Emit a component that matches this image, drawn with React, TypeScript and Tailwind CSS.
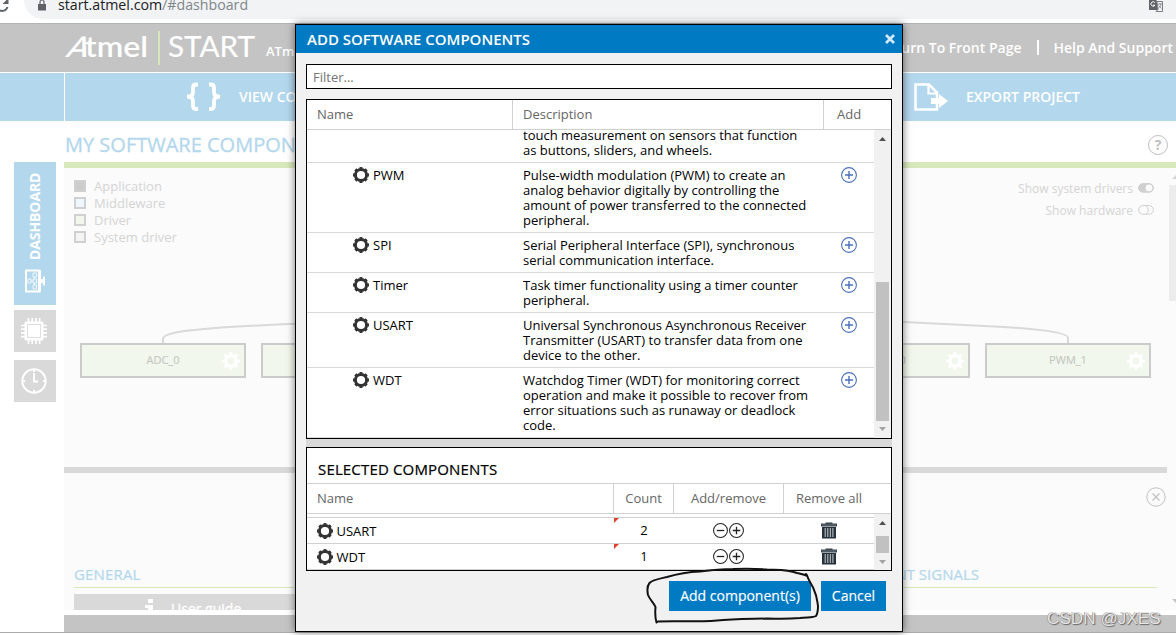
import React from "react";

const components = [
  { name: "PWM", text: ["Pulse-width modulation (PWM) to create an", "analog behavior digitally by controlling the", "amount of power transferred to the connected", "peripheral."] },
  { name: "SPI", text: ["Serial Peripheral Interface (SPI), synchronous", "serial communication interface."] },
  { name: "Timer", text: ["Task timer functionality using a timer counter", "peripheral."] },
  { name: "USART", text: ["Universal Synchronous Asynchronous Receiver", "Transmitter (USART) to transfer data from one", "device to the other."] },
  { name: "WDT", text: ["Watchdog Timer (WDT) for monitoring correct", "operation and make it possible to recover from", "error situations such as runaway or deadlock", "code."] },
];

const selected = [
  { name: "USART", count: 2 },
  { name: "WDT", count: 1 },
];

function DarkGear() {
  return (
    <svg width="16" height="16" viewBox="0 0 16 16" fill="none" stroke="#333" className="shrink-0">
      <circle cx="8" cy="8" r="5.6" strokeWidth="3" />
      <circle cx="8" cy="8" r="7" strokeWidth="2" pathLength="80" strokeDasharray="5.4 4.6" strokeDashoffset="2.7" />
    </svg>
  );
}

function WhiteGear() {
  return (
    <svg width="18" height="18" viewBox="0 0 18 18" fill="none" stroke="#fff" className="shrink-0">
      <circle cx="9" cy="9" r="5.2" strokeWidth="3.6" />
      <circle cx="9" cy="9" r="7.5" strokeWidth="3" pathLength="80" strokeDasharray="4.6 5.4" strokeDashoffset="2.3" />
    </svg>
  );
}

function RoundSign({ plus, size, color }: { plus: boolean; size: number; color: string }) {
  return (
    <svg width={size} height={size} viewBox="0 0 16 16" fill="none" stroke={color} className="shrink-0">
      <circle cx="8" cy="8" r="7.4" strokeWidth="1.1" />
      <path d={plus ? "M8 4v8M4 8h8" : "M4 8h8"} strokeWidth="1.4" />
    </svg>
  );
}

function Trash() {
  return (
    <svg width="16" height="17" viewBox="0 0 16 17" className="shrink-0">
      <path d="M4.500 1.500V.5h7v1H16v3H0v-3z" fill="#3a454e" />
      <path d="M1 5h14v11.500H1z" fill="#26323c" />
      <path d="M4.200 6v9M6.800 6v9M9.300 6v9M11.900 6v9" stroke="#c9cdd0" strokeWidth="1" />
      <path d="M1 3h14" stroke="#77808a" strokeWidth=".7" />
    </svg>
  );
}

function Arrow({ down, color }: { down?: boolean; color: string }) {
  return (
    <svg width="7" height="4" viewBox="0 0 7 4">
      <path d={down ? "M0 0h7L3.5 4z" : "M0 4h7L3.5 0z"} fill={color} />
    </svg>
  );
}

function Node({ label, place }: { label: string; place: string }) {
  return (
    <div className={"absolute top-[175px] flex h-[35px] w-[166px] items-center justify-end border-2 border-[#cbcbcb] bg-[#f1f7ec] pr-[4px] " + place}>
      <span className="flex-1 pl-[22px] text-center text-[11px] text-[#c4c6c2] [-webkit-text-stroke:0.1px_#c4c6c2]">{label}</span>
      <WhiteGear />
    </div>
  );
}

function BrowserBar() {
  return (
    <div className="flex h-[24px] shrink-0 items-start border-b border-[#b3b3b3] bg-white">
      <svg width="24" height="19" viewBox="0 0 24 19" className="shrink-0">
        <path d="M-4 6A6 6 0 0 0 7.500 7" fill="none" stroke="#5f6368" strokeWidth="2" />
        <path d="M8.500-2V4H2.500z" fill="#5f6368" />
      </svg>
      <div className="flex h-[19px] flex-1 items-start rounded-bl-[19px] bg-[#f1f3f4] pr-[13px] pl-[14px]">
        <svg width="8" height="11" viewBox="0 0 8 11" className="shrink-0">
          <path d="M0 4h8v6.500H0z" fill="#5f6368" />
          <path d="M2 4V2a2 2 0 0 1 4 0v2" stroke="#5f6368" strokeWidth="1.200" fill="none" />
        </svg>
        <span className="mt-[-6px] ml-[12px] flex-1 text-[14.200px] leading-[22px] text-[#202124]">
          start.atmel.com<span className="text-[#80868b]">/#dashboard</span>
        </span>
        <svg width="14" height="12" viewBox="0 0 14 12">
          <path d="M0 0h7.500l2 10H0z" fill="#5f6368" />
          <path d="M8 1.500h5.500v10H7l2-2z" fill="#f1f3f4" stroke="#7b7f84" />
          <path d="M5.800 2.500A2.200 2.200 0 1 0 6 5.200H4" fill="none" stroke="#fff" />
          <path d="M9 4h4M11 3v1M12 4c0 2-1 3-2.500 4M9.800 5.500l2.500 3" fill="none" stroke="#7b7f84" strokeWidth=".8" />
        </svg>
      </div>
    </div>
  );
}

function Header() {
  return (
    <div className="flex h-[49px] shrink-0 items-center border-b border-white bg-[#c4c4c4] pr-[3px] pl-[65px] text-white">
      <div className="flex h-[34px] w-[93px] items-center">
        <svg width="86" height="28" viewBox="0 0 86 28" fill="#fff">
          <text transform="translate(0 22.5) skewX(-22)" fontFamily="Lato" fontWeight="600" fontSize="28.500" textLength="21" lengthAdjust="spacingAndGlyphs">A</text>
          <text x="20" y="22.5" fontFamily="Lato" fontWeight="600" fontSize="28" textLength="63" lengthAdjust="spacingAndGlyphs">tmel</text>
          <circle cx="80.500" cy="3.500" r="1" fillOpacity=".5" />
        </svg>
      </div>
      <div className="h-[34px] w-[2px] bg-[#d5e8b9]" />
      <svg width="92" height="30" viewBox="0 0 92 30" fill="#fff" stroke="#fff" strokeWidth=".2" className="ml-[7px]">
        <text x="1" y="24" fontFamily="Lato" fontSize="28" textLength="87" lengthAdjust="spacingAndGlyphs">START</text>
      </svg>
      <span className="mt-[7px] ml-[7px] flex-1 text-[13px] font-semibold">ATmega4809</span>
      <span className="mt-[-2px] text-[14px] font-semibold">Return To Front Page</span>
      <div className="mx-[15px] mt-[-2px] h-[15px] w-[2px] bg-white" />
      <span className="mt-[-2px] text-[14px] font-semibold">Help And Support</span>
    </div>
  );
}

function Menu() {
  return (
    <div className="flex h-[48px] shrink-0 items-center bg-[#b3d7ed] text-[14px] font-semibold text-white">
      <div className="h-full w-[65px] border-r border-white" />
      <svg width="36" height="30" viewBox="0 0 36 30" fill="none" stroke="#fff" strokeWidth="3.800" className="ml-[121px]">
        <path d="M12 2.500H10Q7 2.500 7 6v4.500Q7 14.500 1 14.500 7 14.500 7 19v4.500Q7 27 10 27h2" />
        <path d="M23 2.500h2q3 0 3 3.500v4.500q0 4 6 4-6 0-6 4.500v4.500q0 3.500-3 3.500h-2" />
      </svg>
      <span className="mt-[-2px] ml-[17px] flex-1">VIEW CODE</span>
      <svg width="34" height="29" viewBox="0 0 34 29" className="mr-[18px]">
        <path d="M1.500 1.500H15l8 8v17H1.500z" fill="none" stroke="#fff" strokeWidth="2.600" />
        <path d="M14.500 2v8.500H23" fill="none" stroke="#fff" strokeWidth="2.200" />
        <path d="M17 15h8v-4l9 7-9 7v-4h-8z" fill="#fff" />
      </svg>
      <span className="mt-[-2px] mr-[96px]">EXPORT PROJECT</span>
    </div>
  );
}

function Sidebar() {
  return (
    <div className="flex w-[64px] shrink-0 flex-col pt-[41px] pl-[14px]">
      <div className="flex h-[143px] w-[42px] flex-col items-center bg-[#b3d7ed]">
        <span className="mt-[10px] h-[88px] rotate-180 text-[14px] leading-[22px] font-bold tracking-[-0.1px] text-white [writing-mode:vertical-rl]">DASHBOARD</span>
        <svg width="20" height="24" viewBox="0 0 20 24" className="mt-[9px]" fill="none" stroke="#fff">
          <path d="M1 1.500h13.500v21H1z" strokeWidth="2" />
          <path d="M14.500 1.500v21" strokeWidth="3" />
          <path d="M15 12h4" strokeWidth="4" />
          <path d="M19 7.500v9" strokeWidth="2" />
          <path d="M8 4h3.500v4H8zM8 10h3.500v4H8zM8 16h3.500v4H8zM3 10h3v4H3zM6 12h2M9.500 8v2M9.500 14v2" strokeWidth=".8" />
        </svg>
      </div>
      <div className="mt-[5px] flex h-[42px] w-[42px] items-center justify-center bg-[#d9d9d9]">
        <svg width="26" height="26" viewBox="0 0 26 26" className="mr-[3px] mb-[1px]" fill="none" stroke="#fff">
          <path d="M7.500 0v26M11.200 0v26M14.900 0v26M18.600 0v26M0 7.500h26M0 11.200h26M0 14.900h26M0 18.600h26" strokeWidth="1.700" />
          <rect x="3.500" y="3.500" width="19" height="19" rx="1.500" fill="#fff" stroke="none" />
          <rect x="6.500" y="6.500" width="13" height="13" stroke="#d9d9d9" strokeWidth=".8" />
        </svg>
      </div>
      <div className="mt-[8px] flex h-[42px] w-[42px] items-center justify-center bg-[#d9d9d9]">
        <svg width="26" height="26" viewBox="0 0 26 26" className="mr-[3px] mb-[1px]" fill="none" stroke="#fff" strokeWidth="2">
          <circle cx="13" cy="13" r="11.700" />
          <path d="M13 5v8.500h4M13 1v3M13 22v3M1 13h3M22 13h3" />
        </svg>
      </div>
    </div>
  );
}

function Legend() {
  const items = [
    ["Application", "bg-[#cbcbcb]"],
    ["Middleware", "bg-[#eef7fd]"],
    ["Driver", "bg-[#f1f7ea]"],
    ["System driver", "bg-[#f4f4f4]"],
  ];
  return (
    <div className="flex flex-col pt-[10px] pl-[10px]">
      {items.map(([label, color]) => (
        <div key={label} className="flex h-[17px] items-start gap-[8px] text-[13px] leading-[17px] text-[#d4d4d4]">
          <div className={"mt-[2px] h-[12px] w-[12px] border-2 border-[#d0d0d0] " + color} />
          <span>{label}</span>
        </div>
      ))}
    </div>
  );
}

function Toggle({ on }: { on?: boolean }) {
  return (
    <svg width="16" height="10" viewBox="0 0 16 10" fill="none" stroke="#d0d0d0" className="mt-[-2px]">
      <rect x=".6" y=".6" width="14.800" height="8.600" rx="4.300" fill={on ? "#d0d0d0" : "none"} />
      {on ? <circle cx="11" cy="4.900" r="4" fill="#fbfbfb" /> : <path d="M8 1a4.500 4.500 0 0 1 0 8" />}
    </svg>
  );
}

function Dashboard() {
  return (
    <div className="flex min-w-0 flex-1 flex-col">
      <div className="flex h-[41px] shrink-0 items-center justify-between pt-[6px] pr-[8px]">
        <h1 className="pl-[1px] text-[20px] whitespace-nowrap text-[#b3d7ed] [-webkit-text-stroke:0.3px_#b3d7ed]">MY SOFTWARE COMPONENTS</h1>
        <div className="flex h-[20px] w-[20px] items-center justify-center rounded-full border border-[#bfbfbf] text-[14px] font-bold text-[#bfbfbf]">?</div>
      </div>
      <div className="h-[6px] shrink-0 bg-[#d7e8ba]" />
      <div className="relative flex h-[299px] shrink-0 justify-between bg-[#fbfbfb]">
        <Legend />
        <div className="flex flex-col items-end gap-[4px] pt-[12px] pr-[22px] text-[12px] leading-[18px] text-[#d4d4d4]">
          <div className="flex items-center gap-[5px]"><span>Show system drivers</span><Toggle on /></div>
          <div className="flex items-center gap-[5px]"><span>Show hardware</span><Toggle /></div>
        </div>
        <svg className="absolute top-0 left-0" width="1112" height="299" viewBox="0 0 1112 299" fill="none" stroke="#d9d9d9" strokeWidth="2">
          <path d="M99 176v-5Q99 165 130 162 170 158 250 155" />
          <path d="M820 153L940 159Q1004 163 1004 170v6" />
        </svg>
        <Node label="ADC_0" place="left-[16px]" />
        <Node label="ADC_1" place="left-[197px]" />
        <Node label="PWM_0" place="left-[740px]" />
        <Node label="PWM_1" place="left-[921px]" />
        <div className="absolute top-[17px] right-0 h-[116px] w-[7px] bg-[#ececec]" />
        <svg className="absolute top-[7px] right-0" width="4" height="4" viewBox="0 0 4 4"><path d="M0 4 4 0v4z" fill="#d4d4d4" /></svg>
      </div>
      <div className="flex h-[143px] shrink-0 flex-col overflow-hidden bg-[#fbfbfb]">
        <div className="mr-[9px] h-[6px] shrink-0 bg-[#d9d9d9]" />
        <div className="flex h-[92px] shrink-0 justify-end pt-[14px] pr-[10px]">
          <svg width="20" height="20" viewBox="0 0 20 20" fill="none" stroke="#c0c0c0">
            <circle cx="10" cy="10" r="9.200" />
            <path d="M6.500 6.500l7 7M13.500 6.500l-7 7" strokeWidth="1.200" />
          </svg>
        </div>
        <div className="flex flex-1 gap-[20px] pl-[10px]">
          <div className="flex w-[330px] flex-col">
            <h2 className="h-[23px] border-b border-[#d7e8ba] pt-[2px] text-[15px] leading-[14px] tracking-[0.15px] text-[#b3d7ed] [-webkit-text-stroke:0.2px_#b3d7ed]">GENERAL</h2>
            <div className="mt-[6px] flex h-[28px] gap-[16px] bg-[#d9d9d9] pl-[71px] text-white">
              <svg width="10" height="18" viewBox="0 0 10 18" fill="#fff" className="mt-[4px]"><path d="M3 1h5v4H3zM0 7h8v11H3V10H0z" /></svg>
              <span className="pt-[5px] text-[14px] leading-[20px] [-webkit-text-stroke:0.3px_#fff]">User guide</span>
            </div>
          </div>
          <div className="mr-[19px] flex flex-1 flex-col">
            <h2 className="h-[23px] border-b border-[#d7e8ba] pt-[2px] pr-[178px] text-right text-[15px] leading-[14px] whitespace-nowrap text-[#b3d7ed] [-webkit-text-stroke:0.2px_#b3d7ed]">EVENT SIGNALS</h2>
            <div className="flex justify-end"><svg className="mt-[11px] mr-[-19px]" width="4" height="4" viewBox="0 0 4 4"><path d="M0 0h4v4z" fill="#c4c4c4" /></svg></div>
          </div>
        </div>
      </div>
      <div className="h-[5px] shrink-0 bg-white" />
      <div className="h-[17px] shrink-0 bg-[#c4c4c4]" />
    </div>
  );
}

function Dialog() {
  return (
    <div className="absolute top-[24px] left-[295px] flex h-[608px] w-[608px] flex-col border border-black bg-[#f1f1f1] shadow-[0_0_8px_rgba(0,0,0,0.55)]">
      <div className="flex h-[28px] shrink-0 items-center justify-between bg-[#007ac2] pr-[7px] pl-[11px] text-white">
        <span className="text-[15px] font-semibold">ADD SOFTWARE COMPONENTS</span>
        <svg width="10" height="10" viewBox="0 0 10 10" stroke="#d5eaf7" strokeWidth="2.600"><path d="M1 1l8 8M9 1L1 9" /></svg>
      </div>
      <div className="flex flex-1 flex-col px-[10px] pt-[11px]">
        <div className="flex h-[25px] shrink-0 items-center border border-black bg-white pt-[2px] pl-[6px] text-[13px] text-[#757575]">Filter...</div>
        <div className="mt-[10px] flex h-[340px] shrink-0 flex-col border border-black bg-white">
          <div className="flex h-[30px] shrink-0 border-b border-[#d0d0d0] text-[13px] leading-[28px] text-[#666]">
            <div className="w-[206px] border-r border-[#d0d0d0] pl-[10px]">Name</div>
            <div className="w-[311px] border-r border-[#d0d0d0] pl-[10px]">Description</div>
            <div className="pl-[13px]">Add</div>
          </div>
          <div className="flex h-[308px]">
            <div className="flex flex-1 flex-col justify-end overflow-hidden text-[13px] leading-[15px] text-black">
              <div className="flex shrink-0 border-b border-[#d9d9d9] pb-[4px] pl-[216px] whitespace-nowrap">
                <div>
                  <div>touch measurement on sensors that function</div>
                  <div>as buttons, sliders, and wheels.</div>
                </div>
              </div>
              {components.map((c) => (
                <div key={c.name} className="flex shrink-0 border-b border-[#d9d9d9] pt-[5px] pb-[4px]">
                  <div className="flex w-[216px] items-start gap-[4px] pl-[46px]">
                    <div className="mt-[-1px]"><DarkGear /></div>
                    <span>{c.name}</span>
                  </div>
                  <div className="w-[318px] whitespace-nowrap">
                    {c.text.map((line) => <div key={line}>{line}</div>)}
                  </div>
                  <div className="mt-[-1px]"><RoundSign plus size={16} color="#4a6fbd" /></div>
                </div>
              ))}
            </div>
            <div className="flex w-[17px] flex-col items-center bg-[#f1f1f1] pt-[7px] pb-[7px]">
              <Arrow color="#505050" />
              <div className="mt-[141px] h-[139px] w-[13px] bg-[#c1c1c1]" />
              <div className="flex flex-1 items-end"><Arrow down color="#a3a3a3" /></div>
            </div>
          </div>
        </div>
        <div className="h-[8px] shrink-0 bg-[#d9d9d9]" />
        <div className="flex h-[124px] shrink-0 flex-col border border-black bg-white">
          <div className="flex h-[36px] shrink-0 items-center border-b border-[#d0d0d0] pt-[8px] pl-[11px] text-[15px] tracking-[0.16px] text-black [-webkit-text-stroke:0.2px_#000]">SELECTED COMPONENTS</div>
          <div className="flex h-[30px] shrink-0 border-b border-[#d0d0d0] text-[13px] leading-[28px] text-[#666]">
            <div className="w-[307px] border-r border-[#d0d0d0] pl-[10px]">Name</div>
            <div className="w-[60px] border-r border-[#d0d0d0] text-center">Count</div>
            <div className="w-[110px] border-r border-[#d0d0d0] text-center">Add/remove</div>
            <div className="pl-[12px]">Remove all</div>
          </div>
          <div className="flex h-[56px]">
            <div className="flex flex-1 flex-col text-[13px] text-black">
              <div className="h-[4px] shrink-0 border-b border-[#d0d0d0]" />
              {selected.map((s) => (
                <div key={s.name} className="flex h-[26px] shrink-0 items-center border-b border-[#d0d0d0]">
                  <div className="flex w-[307px] items-center gap-[4px] pt-[1px] pl-[10px]"><DarkGear /><span className="ml-[-0.5px] pt-[2px]">{s.name}</span></div>
                  <div className="flex h-full w-[60px]">
                    <svg width="5" height="5" viewBox="0 0 5 5"><path d="M0 0h5L0 5z" fill="#e0402c" /></svg>
                    <span className="flex-1 pr-[5px] text-center leading-[25px]">{s.count}</span>
                  </div>
                  <div className="flex w-[110px] justify-center gap-[1px] pr-[2px] pb-[1px]"><RoundSign plus={false} size={15} color="#222" /><RoundSign plus size={15} color="#222" /></div>
                  <div className="mt-[-1px] pl-[37px]"><Trash /></div>
                </div>
              ))}
            </div>
            <div className="flex w-[17px] flex-col items-center bg-[#f1f1f1] pt-[7px] pb-[6px]">
              <Arrow color="#505050" />
              <div className="mt-[11px] h-[17px] w-[13px] bg-[#c1c1c1]" />
              <div className="flex flex-1 items-end"><Arrow down color="#a3a3a3" /></div>
            </div>
          </div>
        </div>
        <div className="flex justify-end gap-[10px] pt-[10px] pr-[6px] text-[14px] text-white [-webkit-text-stroke:0.15px_#fff]">
          <button className="h-[30px] w-[142px] bg-[#007ac2] pb-[2px]">Add component(s)</button>
          <button className="h-[30px] w-[65px] bg-[#007ac2] pb-[2px]">Cancel</button>
        </div>
      </div>
    </div>
  );
}

export default function App() {
  return (
    <div className="relative flex h-[635px] w-[1176px] flex-col overflow-hidden bg-white font-['Open_Sans',sans-serif]">
      <BrowserBar />
      <Header />
      <Menu />
      <div className="flex h-[511px] shrink-0">
        <Sidebar />
        <Dashboard />
      </div>
      <div className="h-px shrink-0 bg-[#aaa]" />
      <Dialog />
      <svg className="pointer-events-none absolute top-[560px] left-[640px]" width="190" height="70" viewBox="640 560 190 70" fill="none" stroke="#111" strokeWidth="2" strokeLinecap="round" strokeLinejoin="round">
        <path d="M807 576C804 574 801 574 797 573C787 569 777 570 767 569.500C755 568.500 744 568.500 733 569C722 569 711 570 700 571.500C688 572 677 574 667 577C658 579 652 580 649.500 583C647 586 647 590 648 595C650 600 654 603 655.500 607C655 613 655 618 656.500 622.500L658 621.500C675 621 699 622 717 620.500C732 619 750 619 767 618.500C780 619 790 619 800 618C807 617 813 618 816 616C818 613 818 609 818 606C817 600 817 596 814 590C813 586 810 583 809 580C807 577 808 576 806 574" />
      </svg>
      <span className="absolute top-[609px] left-[1047px] font-['Liberation_Sans',sans-serif] text-[17px] leading-[19px] tracking-[0.1px] whitespace-nowrap text-[#e6e6e6] [text-shadow:1px_1px_1px_#666,-0.5px_-0.5px_0_#888]">CSDN @JXES</span>
    </div>
  );
}
